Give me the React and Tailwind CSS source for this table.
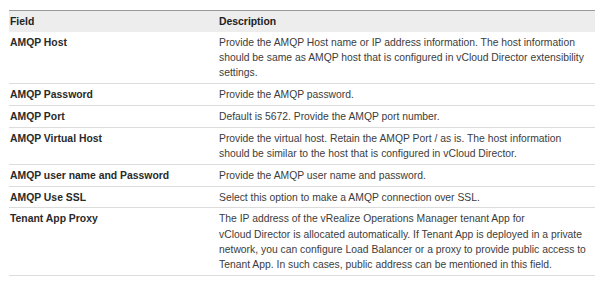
import React from "react";

const rows = [
  {
    f: "AMQP Host",
    d: "Provide the AMQP Host name or IP address information. The host information should be same as AMQP host that is configured in vCloud Director extensibility settings.",
  },
  { f: "AMQP Password", d: "Provide the AMQP password." },
  { f: "AMQP Port", d: "Default is 5672. Provide the AMQP port number." },
  {
    f: "AMQP Virtual Host",
    d: "Provide the virtual host. Retain the AMQP Port / as is. The host information should be similar to the host that is configured in vCloud Director.",
  },
  { f: "AMQP user name and Password", d: "Provide the AMQP user name and password." },
  { f: "AMQP Use SSL", d: "Select this option to make a AMQP connection over SSL." },
  {
    f: "Tenant App Proxy",
    d: (
      <>
        The IP address of the vRealize Operations Manager tenant App for
        <br />
        vCloud Director is allocated automatically. If Tenant App is deployed in a private network, you can configure Load Balancer or a proxy to provide public access to Tenant App. In such cases, public address can be mentioned in this field.
      </>
    ),
  },
];

export default function App() {
  return (
    <div
      className="w-[614px] h-[286px] bg-white pt-[10px] pl-[9px]"
      style={{ fontFamily: '"Liberation Sans", Arial, sans-serif' }}
    >
      <div className="w-[586px] border-t-[1.5px] border-[#9a9a9a] leading-[15.3px]">
        <div className="grid grid-cols-[210px_1fr] bg-[#ededed] font-bold text-[10.4px] text-[#222] pt-[3px] pb-[2.5px]">
          <div className="pl-[1px]">Field</div>
          <div>Description</div>
        </div>
        {rows.map((r, i) => (
          <div
            key={i}
            className="grid grid-cols-[210px_1fr] border-b border-[#dcdcdc] pt-[3px] pb-[2.5px]"
          >
            <div className="pl-[1px] font-bold text-[10.4px] text-[#2a2a2a]">{r.f}</div>
            <div className="text-[10.35px] text-[#3c3c3c] pr-[5px]">{r.d}</div>
          </div>
        ))}
      </div>
    </div>
  );
}
